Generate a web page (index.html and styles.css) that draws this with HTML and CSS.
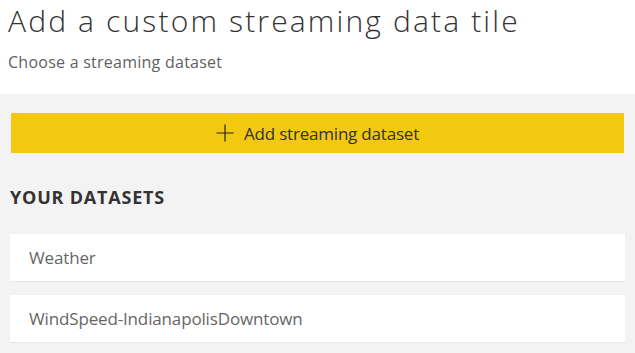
FILE: index.html
```html
<!DOCTYPE html>
<html>
<head>
<meta charset="utf-8">
<link rel="stylesheet" href="styles.css">
</head>
<body>
<header class="head">
  <h1 class="title">Add a custom streaming data tile</h1>
  <p class="subtitle">Choose a streaming dataset</p>
</header>
<main class="panel">
  <button class="add-btn">
    <svg class="plus" width="18" height="18" viewBox="0 0 18 18"><path d="M9 0.5V17.5M0.5 9H17.5" stroke="#222" stroke-width="1.2" fill="none"/></svg>
    <span>Add streaming dataset</span>
  </button>
  <h2 class="section">YOUR DATASETS</h2>
  <ul class="list">
    <li class="item">Weather</li>
    <li class="item">WindSpeed-IndianapolisDowntown</li>
  </ul>
</main>
</body>
</html>
```
FILE: styles.css
```css
* { box-sizing: border-box; }
html, body { margin: 0; padding: 0; }
body {
  width: 635px;
  height: 353px;
  overflow: hidden;
  background: #fff;
  font-family: "Open Sans", "Noto Sans", sans-serif;
  color: #333;
}
.head {
  height: 94px;
  padding: 0 0 0 8px;
}
.title {
  margin: 0;
  font-size: 30px;
  font-weight: 300;
  line-height: 41px;
  color: #333;
  letter-spacing: 2.15px;
}
.subtitle {
  margin: 11px 0 0 0;
  font-size: 16px;
  line-height: 20px;
  font-weight: 400;
  color: #5f5f5f;
  letter-spacing: 0.25px;
}
.panel {
  background: #f3f3f3;
  height: 259px;
  padding: 19px 11px 0 10px;
}
.add-btn {
  display: flex;
  align-items: center;
  justify-content: center;
  gap: 10px;
  width: 613px;
  height: 40px;
  margin-left: 1px;
  border: 0;
  background: #f2c811;
  font-family: inherit;
  font-size: 17px;
  color: #333;
  padding: 0;
  letter-spacing: -0.2px;
}
.section {
  margin: 33px 0 0 0;
  font-size: 18px;
  font-weight: 700;
  line-height: 22px;
  color: #333;
  letter-spacing: 0.8px;
}
.list {
  list-style: none;
  margin: 26px 0 0 0;
  padding: 0;
  display: flex;
  flex-direction: column;
  gap: 13px;
}
.item {
  width: 615px;
  height: 48px;
  background: #fff;
  border-bottom: 1px solid #e6e6e6;
  padding: 0 0 0 19px;
  display: flex;
  align-items: center;
  font-size: 17px;
  color: #666;
  letter-spacing: -0.15px;
}
```
